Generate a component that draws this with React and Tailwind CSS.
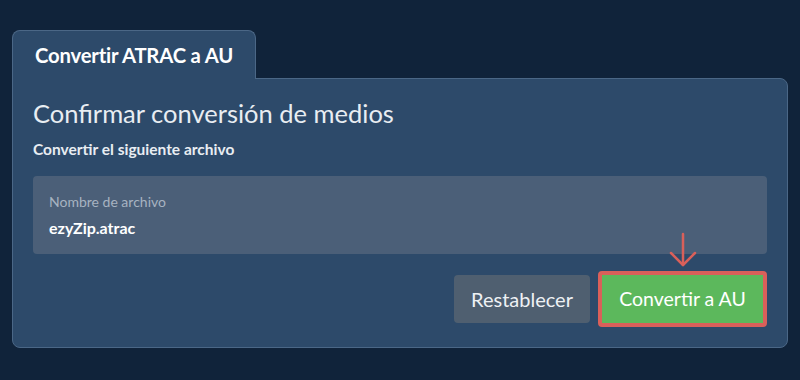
function App() {
    return (
        <div className="w-[800px] h-[380px] bg-[#10233a] pt-[30px] px-3 font-['Lato','Liberation_Sans',sans-serif]">
            <div className="flex">
                <div className="relative z-10 -mb-px rounded-t-lg border border-b-0 border-[#4b6786] bg-[#2d4a6a] px-[22px] pt-[12px] pb-[10px]">
                    <span className="text-[20.3px] leading-6 font-bold text-white tracking-[-0.2px]">Convertir ATRAC a AU</span>
                </div>
            </div>
            <div className="rounded-b-lg rounded-tr-lg border border-[#4b6786] bg-[#2d4a6a] px-5 pt-[18px] pb-5">
                <h1 className="text-[25.5px] leading-8 text-[#e8edf2]">Confirmar conversión de medios</h1>
                <p className="mt-[10px] text-[15.5px] leading-5 font-bold text-[#e8edf2]">Convertir el siguiente archivo</p>
                <div className="mt-[17px] h-[78px] rounded bg-[#4b5f78] px-4 pt-[16px]">
                    <p className="text-[14px] leading-5 text-[#a7b3c1]">Nombre de archivo</p>
                    <p className="mt-[4px] text-[16px] leading-6 font-bold text-white">ezyZip.atrac</p>
                </div>
                <div className="mt-[17px] flex justify-end items-center gap-2">
                    <button className="h-[48px] w-[136px] rounded bg-[#4f5f70] text-[20px] text-[#eef1f4]">Restablecer</button>
                    <div className="relative">
                        <svg className="absolute left-1/2 -translate-x-1/2 -top-[39px]" width="30" height="36" viewBox="0 0 30 36" fill="none" stroke="#d9605a" strokeWidth="2.5" strokeLinecap="round" strokeLinejoin="round">
                            <path d="M15 2 V33" />
                            <path d="M3 21 L15 33 L27 21" />
                        </svg>
                        <button className="h-[56px] w-[169px] rounded border-4 border-[#d9605a] bg-[#5cb85c] text-[19.5px] text-white">Convertir a AU</button>
                    </div>
                </div>
            </div>
        </div>
    )
}

export default App
